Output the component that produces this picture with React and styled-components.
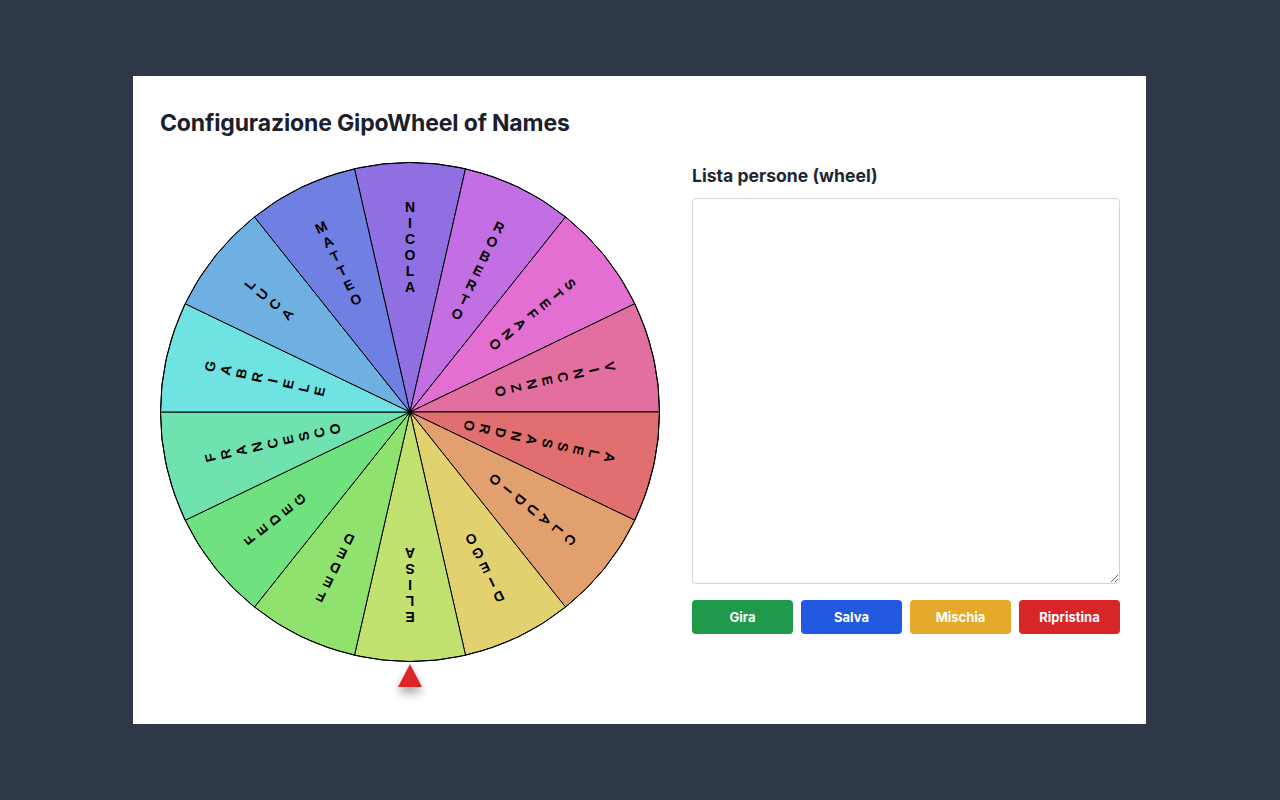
import React from "react";
import styled, { createGlobalStyle } from "styled-components";

const NAMES = [
  "NICOLA",
  "ROBERTO",
  "STEFANO",
  "VINCENZO",
  "ALESSANDRO",
  "CLAUDIO",
  "DIEGO",
  "ELISA",
  "FEDED",
  "FEDEG",
  "FRANCESCO",
  "GABRIELE",
  "LUCA",
  "MATTEO",
];

const SIZE = 500;
const CX = 250;
const CY = 250;
const R = 249.5;

const GlobalStyle = createGlobalStyle`
  html, body {
    margin: 0;
    padding: 0;
    background: #2e3848;
  }
  body {
    font-family: Inter, "Noto Sans", "Liberation Sans", sans-serif;
  }
`;

const Page = styled.div`
  min-height: 100vh;
  padding-right: 1px;
  display: flex;
  align-items: center;
  justify-content: center;
`;

const Card = styled.div`
  width: 1013px;
  box-sizing: border-box;
  background: #ffffff;
  padding: 33px 26px 37px 27px;
`;

const Title = styled.h1`
  margin: 0 0 24px;
  font-size: 23px;
  line-height: 29px;
  font-weight: 700;
  color: #1a202c;
  letter-spacing: -0.15px;
`;

const Row = styled.div`
  display: flex;
  gap: 32px;
  align-items: flex-start;
`;

const WheelColumn = styled.div`
  width: 500px;
  display: flex;
  flex-direction: column;
  align-items: center;
`;

const WheelSvg = styled.svg`
  display: block;
`;

const Pointer = styled.div`
  margin-top: 2px;
  width: 0;
  height: 0;
  border-left: 12px solid transparent;
  border-right: 12px solid transparent;
  border-bottom: 23px solid #dc2626;
  filter: drop-shadow(0 6px 5px rgba(0, 0, 0, 0.35));
`;

const SideColumn = styled.div`
  flex: 1;
  display: flex;
  flex-direction: column;
`;

const Label = styled.label`
  font-size: 17.6px;
  line-height: 28px;
  font-weight: 700;
  color: #1f2633;
  margin-bottom: 8px;
`;

const NamesArea = styled.textarea`
  box-sizing: border-box;
  width: 100%;
  height: 386px;
  border: 1px solid #cfd4dc;
  border-radius: 4px;
  background: #fff;
  font-family: inherit;
  font-size: 14px;
  padding: 8px;
`;

const ButtonBar = styled.div`
  display: flex;
  gap: 8px;
  margin-top: 16px;
`;

const ActionButton = styled.button`
  flex: 1;
  height: 34px;
  border: none;
  border-radius: 4px;
  background: ${(p) => p.$bg};
  color: #ffffff;
  font-family: inherit;
  font-size: 13px;
  font-weight: 700;
  cursor: pointer;
`;

function point(r, deg) {
  const a = (deg * Math.PI) / 180;
  return [CX + r * Math.sin(a), CY - r * Math.cos(a)];
}

function Wheel() {
  const step = 360 / NAMES.length;
  return (
    <WheelSvg width={SIZE} height={SIZE} viewBox={`0 0 ${SIZE} ${SIZE}`}>
      {NAMES.map((name, i) => {
        const mid = i * step;
        const [x1, y1] = point(R, mid - step / 2);
        const [x2, y2] = point(R, mid + step / 2);
        // colori in ordine alfabetico partendo da ALESSANDRO
        const hue = (((i - 4 + NAMES.length) % NAMES.length) * 360) / NAMES.length;
        return (
          <path
            key={name}
            d={`M${CX} ${CY} L${x1} ${y1} A${R} ${R} 0 0 1 ${x2} ${y2} Z`}
            fill={`hsl(${hue}, 66%, 66%)`}
            stroke="#000"
            strokeWidth="1"
          />
        );
      })}
      <circle cx={CX} cy={CY} r={R} fill="none" stroke="#000" strokeWidth="1" />
      {NAMES.map((name, i) => {
        const mid = i * step;
        return name.split("").map((ch, j) => {
          const [x, y] = point(205 - j * 16, mid);
          return (
            <text
              key={`${name}-${j}`}
              x={x}
              y={y}
              transform={`rotate(${mid} ${x} ${y})`}
              textAnchor="middle"
              dominantBaseline="central"
              fontFamily='"Liberation Sans", Arial, sans-serif'
              fontWeight="700"
              fontSize="14"
              fill="#000"
            >
              {ch}
            </text>
          );
        });
      })}
      <circle cx={CX} cy={CY} r="2.5" fill="#000" />
    </WheelSvg>
  );
}

export default function App() {
  return (
    <Page>
      <GlobalStyle />
      <Card>
        <Title>Configurazione GipoWheel of Names</Title>
        <Row>
          <WheelColumn>
            <Wheel />
            <Pointer />
          </WheelColumn>
          <SideColumn>
            <Label htmlFor="names">Lista persone (wheel)</Label>
            <NamesArea id="names" />
            <ButtonBar>
              <ActionButton $bg="#1e9a4a">Gira</ActionButton>
              <ActionButton $bg="#2159e1">Salva</ActionButton>
              <ActionButton $bg="#e5a92b">Mischia</ActionButton>
              <ActionButton $bg="#d72628">Ripristina</ActionButton>
            </ButtonBar>
          </SideColumn>
        </Row>
      </Card>
    </Page>
  );
}
